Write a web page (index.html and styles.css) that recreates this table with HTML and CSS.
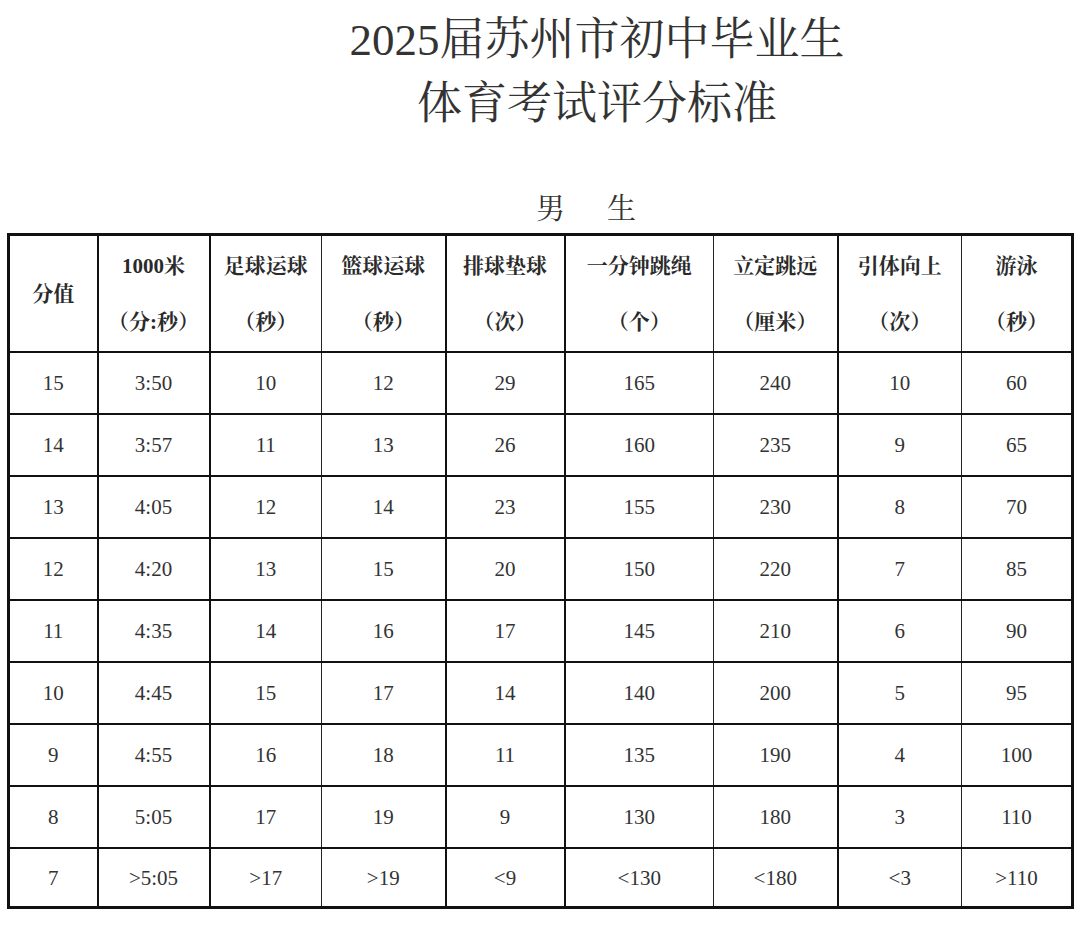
FILE: index.html
```html
<!DOCTYPE html>
<html lang="zh-CN">
<head>
<meta charset="utf-8">
<title>2025届苏州市初中毕业生体育考试评分标准</title>
<link rel="stylesheet" href="styles.css">
</head>
<body>
<div class="page">
  <h1 class="title">
    <span class="title-line">2025届苏州市初中毕业生</span>
    <span class="title-line">体育考试评分标准</span>
  </h1>
  <div class="subtitle"><span>男</span><span>生</span></div>
  <table class="score">
    <colgroup>
      <col class="c1"><col class="c2"><col class="c3"><col class="c4"><col class="c5"><col class="c6"><col class="c7"><col class="c8"><col class="c9">
    </colgroup>
    <thead>
      <tr>
        <th class="b-r">分值</th>
        <th class="b-r"><span class="num-b">1000</span>米<br>（分:秒）</th>
        <th class="t-r">足球运球<br>（秒）</th>
        <th class="b-r">篮球运球<br>（秒）</th>
        <th class="b-r">排球垫球<br>（次）</th>
        <th class="t-r">一分钟跳绳<br>（个）</th>
        <th class="b-r">立定跳远<br>（厘米）</th>
        <th class="t-r">引体向上<br>（次）</th>
        <th>游泳<br>（秒）</th>
      </tr>
    </thead>
    <tbody>
      <tr><td class="b-r">15</td><td class="b-r">3:50</td><td class="t-r">10</td><td class="b-r">12</td><td class="b-r">29</td><td class="t-r">165</td><td class="b-r">240</td><td class="t-r">10</td><td>60</td></tr>
      <tr><td class="b-r">14</td><td class="b-r">3:57</td><td class="t-r">11</td><td class="b-r">13</td><td class="b-r">26</td><td class="t-r">160</td><td class="b-r">235</td><td class="t-r">9</td><td>65</td></tr>
      <tr><td class="b-r">13</td><td class="b-r">4:05</td><td class="t-r">12</td><td class="b-r">14</td><td class="b-r">23</td><td class="t-r">155</td><td class="b-r">230</td><td class="t-r">8</td><td>70</td></tr>
      <tr><td class="b-r">12</td><td class="b-r">4:20</td><td class="t-r">13</td><td class="b-r">15</td><td class="b-r">20</td><td class="t-r">150</td><td class="b-r">220</td><td class="t-r">7</td><td>85</td></tr>
      <tr><td class="b-r">11</td><td class="b-r">4:35</td><td class="t-r">14</td><td class="b-r">16</td><td class="b-r">17</td><td class="t-r">145</td><td class="b-r">210</td><td class="t-r">6</td><td>90</td></tr>
      <tr><td class="b-r">10</td><td class="b-r">4:45</td><td class="t-r">15</td><td class="b-r">17</td><td class="b-r">14</td><td class="t-r">140</td><td class="b-r">200</td><td class="t-r">5</td><td>95</td></tr>
      <tr><td class="b-r">9</td><td class="b-r">4:55</td><td class="t-r">16</td><td class="b-r">18</td><td class="b-r">11</td><td class="t-r">135</td><td class="b-r">190</td><td class="t-r">4</td><td>100</td></tr>
      <tr><td class="b-r">8</td><td class="b-r">5:05</td><td class="t-r">17</td><td class="b-r">19</td><td class="b-r">9</td><td class="t-r">130</td><td class="b-r">180</td><td class="t-r">3</td><td>110</td></tr>
      <tr class="last"><td class="b-r">7</td><td class="b-r">&gt;5:05</td><td class="t-r">&gt;17</td><td class="b-r">&gt;19</td><td class="b-r">&lt;9</td><td class="t-r">&lt;130</td><td class="b-r">&lt;180</td><td class="t-r">&lt;3</td><td>&gt;110</td></tr>
    </tbody>
  </table>
</div>
</body>
</html>
```

FILE: styles.css
```css
html, body {
  margin: 0;
  padding: 0;
  background: #ffffff;
}

.page {
  width: 1080px;
  padding-top: 8px;
  color: #333333;
  font-family: "Liberation Serif", "Noto Serif CJK SC", "Noto Sans CJK SC", serif;
}

.title {
  margin: 0;
  padding-left: 114px;
  font-size: 45px;
  font-weight: 400;
  line-height: 64px;
  text-align: center;
  display: flex;
  flex-direction: column;
  align-items: center;
}

.title-line {
  display: block;
}

.subtitle {
  margin-top: 53px;
  padding-left: 92px;
  height: 40px;
  line-height: 40px;
  font-size: 29px;
  display: flex;
  justify-content: center;
  gap: 42px;
}

.score {
  margin: 4px 0 0 7px;
  width: 1064px;
  border-collapse: collapse;
  table-layout: fixed;
  border: 3px solid #111111;
  color: #333333;
}

.c1 { width: 89px; }
.c2 { width: 112px; }
.c3 { width: 112px; }
.c4 { width: 124px; }
.c5 { width: 119px; }
.c6 { width: 149px; }
.c7 { width: 124px; }
.c8 { width: 124px; }
.c9 { width: 111px; }

.score th,
.score td {
  padding: 0;
  text-align: center;
  vertical-align: middle;
  border-bottom: 2px solid #111111;
}

.score th {
  height: 115px;
  font-size: 21px;
  font-weight: 700;
  line-height: 56px;
  color: #2a2a2a;
}

.score th .num-b {
  font-weight: 700;
}

.score td {
  height: 60px;
  font-size: 21px;
  line-height: 24px;
}

.score .last td {
  border-bottom: 0;
  height: 57px;
}

.b-r {
  border-right: 2px solid #111111;
}

.t-r {
  border-right: 1px solid #222222;
}
```
